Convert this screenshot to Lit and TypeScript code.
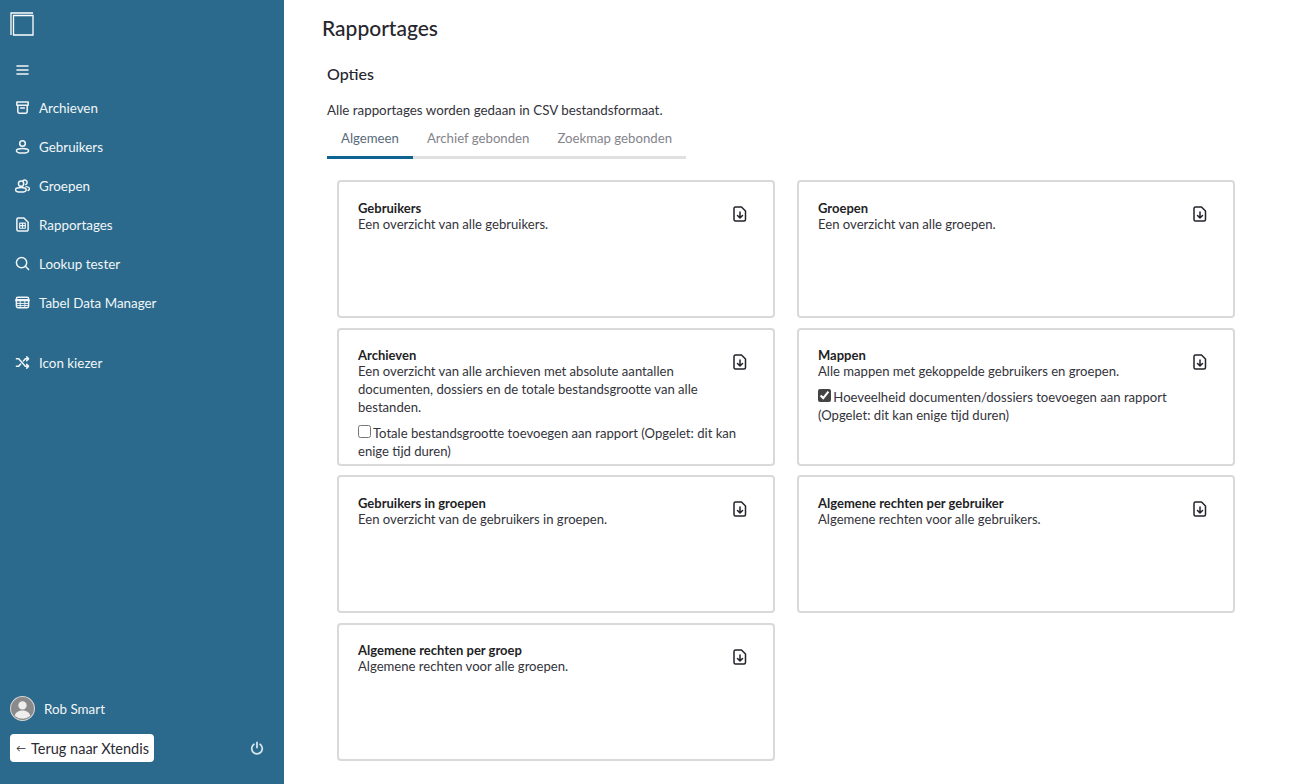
import { css, html, LitElement, svg } from "lit";
import { customElement, state } from "lit/decorators.js";

const navIcons = {
  archive: svg`<path d="M2 2h12v3.500H2zM3 5.500v7a1.500 1.500 0 0 0 1.500 1.500h7a1.500 1.500 0 0 0 1.500-1.500v-7M6 8.500h4"/>`,
  user: svg`<circle cx="8" cy="4.800" r="3"/><path d="M8 10c-3.500 0-6.500.9-6.500 2.500S4.500 15 8 15s6.500-.9 6.500-2.500S11.500 10 8 10z"/>`,
  group: svg`<circle cx="6.500" cy="6" r="2.800"/><path d="M8.500 2.800a2.600 2.600 0 1 1 3 4.200M6.500 10C3.500 10 .5 11 .5 12.500S3.500 15 6.500 15s5.500-1 5.500-2.500S9.500 10 6.500 10zM12 9.200c1.800.3 3.500 1.200 3.500 2.300 0 .8-.6 1.400-1.600 1.800"/>`,
  report: svg`<path d="M3.500 1h6l4.500 4.500v8a1.500 1.500 0 0 1-1.500 1.500h-9A1.500 1.500 0 0 1 2 13.500v-11A1.500 1.500 0 0 1 3.500 1z"/><path d="M5 6.500h6v5.500H5zM5 9.200h6M8 6.500v5.500" stroke-width="1.200"/>`,
  search: svg`<circle cx="7" cy="7" r="5.500"/><path d="M11 11l3.500 3.500"/>`,
  table: svg`<rect x="1.500" y="2.500" width="13" height="11" rx="1.500"/><path d="M1.500 5.500h13" stroke-width="2.500"/><path d="M1.500 9h13M1.500 11.300h13M5.500 6v7.500M10.500 6v7.500" stroke-width="1"/>`,
  shuffle: svg`<path d="M1.500 4h2.500l7 8h3M1.500 12h2.500l2-2.300M9 6.300 11 4h3M12.500 2l2 2-2 2M12.500 10l2 2-2 2"/>`,
};

type NavIcon = keyof typeof navIcons;

const navItems: { label: string; icon: NavIcon }[] = [
  { label: "Archieven", icon: "archive" },
  { label: "Gebruikers", icon: "user" },
  { label: "Groepen", icon: "group" },
  { label: "Rapportages", icon: "report" },
  { label: "Lookup tester", icon: "search" },
  { label: "Tabel Data Manager", icon: "table" },
];

interface ReportCard {
  title: string;
  text: string;
  option?: string;
  checked?: boolean;
}

const cards: ReportCard[] = [
  { title: "Gebruikers", text: "Een overzicht van alle gebruikers." },
  { title: "Groepen", text: "Een overzicht van alle groepen." },
  {
    title: "Archieven",
    text: "Een overzicht van alle archieven met absolute aantallen documenten, dossiers en de totale bestandsgrootte van alle bestanden.",
    option: "Totale bestandsgrootte toevoegen aan rapport (Opgelet: dit kan enige tijd duren)",
  },
  {
    title: "Mappen",
    text: "Alle mappen met gekoppelde gebruikers en groepen.",
    option: "Hoeveelheid documenten/dossiers toevoegen aan rapport (Opgelet: dit kan enige tijd duren)",
    checked: true,
  },
  { title: "Gebruikers in groepen", text: "Een overzicht van de gebruikers in groepen." },
  { title: "Algemene rechten per gebruiker", text: "Algemene rechten voor alle gebruikers." },
  { title: "Algemene rechten per groep", text: "Algemene rechten voor alle groepen." },
];

const tabs = ["Algemeen", "Archief gebonden", "Zoekmap gebonden"];

@customElement("app-root")
export class AppRoot extends LitElement {
  static styles = css`
    * {
      box-sizing: border-box;
      margin: 0;
      padding: 0;
    }

    :host {
      display: flex;
      height: 784px;
      overflow: hidden;
      background: #fff;
      color: #33333b;
      font-family: "Lato", "Noto Sans", sans-serif;
      font-size: 13px;
    }

    .sidebar {
      width: 284px;
      flex: none;
      display: flex;
      flex-direction: column;
      background: #2b6a8c;
      color: #f2f6f8;
      font-size: 13.400px;
    }

    .logo {
      display: block;
      margin: 12px 0 0 10px;
    }

    .menu {
      display: block;
      margin: 28px 0 0 16px;
    }

    nav {
      display: flex;
      flex-direction: column;
      margin-top: 12px;
    }

    .nav-item {
      display: flex;
      align-items: center;
      gap: 9px;
      height: 39px;
      padding-left: 15px;
    }

    .nav-item.spaced {
      margin-top: 21px;
    }

    .nav-item svg,
    .menu,
    .power {
      fill: none;
      stroke: currentColor;
      stroke-width: 1.600;
      stroke-linecap: round;
      stroke-linejoin: round;
    }

    .spacer {
      flex: 1;
    }

    .user {
      display: flex;
      align-items: center;
      gap: 9px;
      padding-left: 10px;
    }

    .foot {
      display: flex;
      align-items: center;
      justify-content: space-between;
      padding: 13px 20px 22px 10px;
    }

    .back {
      display: flex;
      align-items: center;
      gap: 5px;
      height: 28px;
      padding: 0 5px 0 6px;
      border-radius: 4px;
      background: #fff;
      color: #2b2b33;
      font-size: 14.500px;
    }

    .back-arrow {
      font-size: 10px;
    }

    .power {
      color: #d6e6ef;
      stroke-width: 2;
    }

    main {
      flex: 1;
      min-width: 0;
      padding: 16px 65px 0 38px;
    }

    h1 {
      font-size: 21px;
      font-weight: 500;
      line-height: 24px;
      color: #26262c;
    }

    .panel {
      padding: 24px 0 0 5px;
    }

    h2 {
      font-size: 16px;
      font-weight: 500;
      line-height: 20px;
      color: #26262c;
    }

    .intro {
      margin-top: 17px;
      line-height: 18px;
      font-size: 13.350px;
    }

    .tabs {
      display: inline-flex;
      margin-top: 3px;
      border-bottom: 3px solid #e0e0e0;
    }

    .tab {
      padding: 7px 14px 9px;
      margin-bottom: -3px;
      border-bottom: 3px solid transparent;
      line-height: 18px;
      font-size: 13.200px;
      color: #84848c;
    }

    .tab.active {
      color: #586b7a;
      border-bottom-color: #0f6391;
    }

    .cards {
      display: grid;
      grid-template-columns: 438px 438px;
      grid-auto-rows: 138px;
      column-gap: 22px;
      row-gap: 9.500px;
      margin: 21px 0 0 10px;
    }

    .card {
      position: relative;
      padding: 17.500px 31px 0 19px;
      border: 2px solid #d9d9d9;
      border-radius: 4px;
      line-height: 18px;
      font-size: 13.100px;
    }

    .card h3 {
      padding-top: 1px;
      margin-bottom: -1px;
      font-size: 13px;
      font-weight: 700;
      line-height: 15px;
      color: #1f1f26;
    }

    .option {
      display: block;
      margin-top: 8px;
    }

    .option input {
      width: 13px;
      height: 13px;
      margin-right: -1px;
      accent-color: #444;
    }

    .download {
      position: absolute;
      top: 24px;
      right: 25px;
      fill: none;
      stroke: #22222a;
      stroke-width: 1.500;
      stroke-linecap: round;
      stroke-linejoin: round;
    }
  `;

  @state()
  private _activeTab = 0;

  private _renderCard(card: ReportCard) {
    return html`
      <section class="card">
        <h3>${card.title}</h3>
        <p>${card.text}</p>
        ${card.option
          ? html`<label class="option"><input type="checkbox" ?checked=${card.checked} /> ${card.option}</label>`
          : ""}
        <svg class="download" width="16" height="16" viewBox="0 0 16 16">
          <path d="M3.500 1h6l4 4v8.500a1.500 1.500 0 0 1-1.500 1.500H3.500A1.500 1.500 0 0 1 2 13.500v-11A1.500 1.500 0 0 1 3.500 1z" />
          <path d="M8 6v6M5.500 9.500 8 12l2.500-2.500" />
        </svg>
      </section>
    `;
  }

  protected render() {
    return html`
      <aside class="sidebar">
        <svg class="logo" width="24" height="24" viewBox="0 0 24 24" fill="none" stroke="#fff" stroke-width="1.300">
          <path d="M1 23V1h22" />
          <path d="M3.500 3.500h19.500v19.500H3.500z" />
        </svg>
        <svg class="menu" width="13" height="12" viewBox="0 0 13 12">
          <path d="M1 2h11M1 6h11M1 10h11" />
        </svg>
        <nav>
          ${navItems.map(
            (item) => html`
              <div class="nav-item">
                <svg width="15" height="15" viewBox="0 0 16 16">${navIcons[item.icon]}</svg>
                <span>${item.label}</span>
              </div>
            `
          )}
          <div class="nav-item spaced">
            <svg width="15" height="15" viewBox="0 0 16 16">${navIcons.shuffle}</svg>
            <span>Icon kiezer</span>
          </div>
        </nav>
        <div class="spacer"></div>
        <div class="user">
          <svg width="25" height="25" viewBox="0 0 24 24">
            <circle cx="12" cy="12" r="11.500" fill="#8a8a8a" stroke="#d5d5d5" />
            <circle cx="12" cy="9" r="4" fill="#eee" />
            <path d="M4.500 19c1-3.500 4-5 7.500-5s6.500 1.500 7.500 5a11 11 0 0 1-15 0z" fill="#eee" />
          </svg>
          <span>Rob Smart</span>
        </div>
        <div class="foot">
          <div class="back"><span class="back-arrow">←</span><span>Terug naar Xtendis</span></div>
          <svg class="power" width="14" height="14" viewBox="0 0 16 16">
            <path d="M8 1.500v6M4.500 3.800a6 6 0 1 0 7 0" />
          </svg>
        </div>
      </aside>
      <main>
        <h1>Rapportages</h1>
        <div class="panel">
          <h2>Opties</h2>
          <p class="intro">Alle rapportages worden gedaan in CSV bestandsformaat.</p>
          <div class="tabs">
            ${tabs.map(
              (tab, i) => html`<div class="tab ${i === this._activeTab ? "active" : ""}">${tab}</div>`
            )}
          </div>
          <div class="cards">${cards.map((card) => this._renderCard(card))}</div>
        </div>
      </main>
    `;
  }
}

declare global {
  interface HTMLElementTagNameMap {
    "app-root": AppRoot;
  }
}
